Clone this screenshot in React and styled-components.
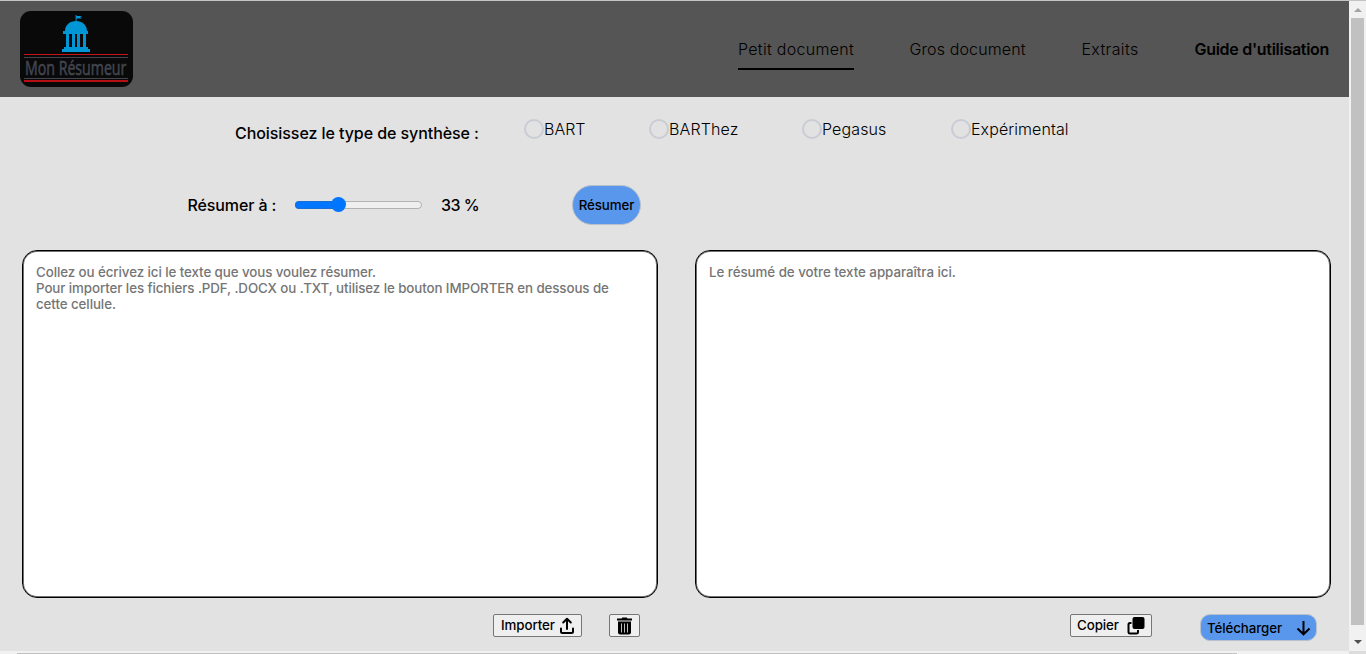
import React from "react";
import styled, { createGlobalStyle } from "styled-components";

const Global = createGlobalStyle`
  * { box-sizing: border-box; }
  body { margin: 0; overflow: hidden; background: #e2e2e2; font-family: Inter, "Liberation Sans", sans-serif; color: #000; }
`;

const Window = styled.div`
  width: 1366px;
  height: 654px;
  overflow: hidden;
  display: grid;
  grid-template-columns: 1349px 17px;
  grid-template-rows: 650px 3px;
  border-top: 1px solid #c1c5c4;
`;
const Page = styled.div`
  background: #e2e2e2;
  overflow: hidden;
`;
const Header = styled.header`
  height: 96px;
  background: #555;
  display: flex;
  justify-content: space-between;
  padding: 10px 19.5px 0 20px;
`;
const Logo = styled.div`
  width: 113px;
  height: 76px;
  background: #090909;
  border-radius: 11px;
  display: flex;
  flex-direction: column;
  align-items: flex-start;
  padding: 4px 0 0 4px;
`;
const LogoName = styled.div`
  width: 104px;
  height: 28px;
  margin-top: 2px;
  border-top: 1px solid #c41216;
  border-bottom: 2px solid #b50f13;
  display: flex;
  flex-direction: column;
  align-items: center;
  &::before, &::after {
    content: "";
    width: 100%;
    height: 1px;
    flex: none;
    background: #44454f;
  }
  &::before { margin-top: 2px; }
  &::after { margin-bottom: 1px; }
`;
const LogoText = styled.svg`
  width: 104px;
  height: 20px;
  flex: none;
  display: block;
  overflow: visible;
`;
const Nav = styled.nav`
  display: flex;
  gap: 56px;
  padding-top: 28px;
`;
const NavLink = styled.a`
  height: 31px;
  width: ${(p) => p.$w}px;
  font-size: 16px;
  line-height: 20px;
  font-weight: ${(p) => (p.$strong ? 600 : 300)};
  letter-spacing: ${(p) => p.$ls || 0}px;
  white-space: nowrap;
  border-bottom: 2px solid ${(p) => (p.$active ? "#000" : "transparent")};
`;
const TypeRow = styled.div`
  display: flex;
  height: 64px;
  padding: 22px 0 0 235px;
`;
const Label = styled.span`
  width: ${(p) => p.$w}px;
  flex: none;
  font-size: 16px;
  line-height: 20px;
  font-weight: 500;
  letter-spacing: ${(p) => p.$ls || 0}px;
  white-space: nowrap;
`;
const TypeTitle = styled(Label)`
  margin-top: 4px;
`;
const Option = styled.label`
  display: flex;
  width: ${(p) => p.$w}px;
  flex: none;
  height: 20px;
  font-size: 16px;
  line-height: 20px;
  font-weight: 300;
  letter-spacing: ${(p) => p.$ls || 0}px;
  white-space: nowrap;
`;
const Radio = styled.span`
  width: 20px;
  height: 20px;
  flex: none;
  border: 2px solid #c9ccd5;
  border-radius: 50%;
`;
const RatioRow = styled.div`
  display: flex;
  align-items: center;
  height: 89px;
  padding: 0 0 2px 187.5px;
`;
const Track = styled.div`
  width: 127px;
  height: 8px;
  margin: 0 19px 0 0;
  border: 1px solid #b2b2b2;
  border-radius: 4px;
  background: #efefef;
  display: flex;
  align-items: center;
`;
const Fill = styled.div`
  width: 44px;
  height: 8px;
  margin-left: -1px;
  flex: none;
  border-radius: 4px 0 0 4px;
  background: #0075ff;
  border: 1px solid #176fd5;
  border-right: 0;
  display: flex;
  align-items: center;
  justify-content: flex-end;
`;
const Knob = styled.div`
  width: 15px;
  height: 15px;
  flex: none;
  margin-right: -7px;
  border-radius: 50%;
  background: #0075ff;
`;
const Primary = styled.button`
  display: flex;
  align-items: center;
  justify-content: ${(p) => (p.$wide ? "space-between" : "center")};
  width: ${(p) => (p.$wide ? 117 : 69)}px;
  height: ${(p) => (p.$wide ? 27 : 40)}px;
  margin: 0;
  padding: ${(p) => (p.$wide ? "0 5px 0 6px" : "0")};
  border: 1px solid #b9c1cc;
  border-radius: ${(p) => (p.$wide ? 10 : 20)}px;
  background: #5897ec;
  color: #000;
  font: 500 13.333px/16px Inter, sans-serif;
  letter-spacing: -0.1px;
  white-space: nowrap;
`;
const Panels = styled.div`
  display: flex;
  gap: 37px;
  padding-left: 22px;
`;
const Area = styled.div`
  width: 636px;
  height: 348px;
  flex: none;
  padding: 13px 38px 0 13px;
  background: #fff;
  border: 1px solid #000;
  box-shadow: inset 0 0 0 1px #707070;
  border-radius: 15px;
  color: #757575;
  font-size: 13.333px;
  line-height: 16px;
  font-weight: 500;
`;
const Line = styled.div`
  white-space: nowrap;
  letter-spacing: ${(p) => p.$ls || 0}px;
`;
const Actions = styled.div`
  display: flex;
  align-items: flex-start;
  padding: 16px 0 0 493px;
`;
const Small = styled.button`
  display: flex;
  align-items: center;
  justify-content: space-between;
  width: ${(p) => p.$w}px;
  height: 23px;
  flex: none;
  margin: 0 ${(p) => p.$mr}px 0 0;
  padding: 0 6px 0 ${(p) => p.$pl || 7}px;
  border: 1px solid #767676;
  border-radius: 2px;
  background: #efefef;
  color: #000;
  font: 500 13.333px/16px Inter, sans-serif;
  letter-spacing: -0.08px;
  white-space: nowrap;
`;
const Caption = styled.span`
  padding-bottom: 1px;
`;
const Glyph = styled.svg`
  display: block;
  flex: none;
`;
const VBar = styled.div`
  height: 650px;
  background: #f1f1f1;
  display: flex;
  flex-direction: column;
  align-items: center;
  padding-top: 7px;
`;
const VThumb = styled.div`
  width: 13px;
  height: 607px;
  flex: none;
  margin: 6px 0 15px;
  background: #c1c1c1;
`;
const VTip = styled.div`
  width: 0;
  height: 0;
  border-left: 4px solid transparent;
  border-right: 4px solid transparent;
  ${(p) => (p.$up ? "border-bottom: 4px solid #a3a3a3;" : "border-top: 4px solid #505050;")}
`;
const HBar = styled.div`
  background: #f1f1f1;
  padding: 2px 0 0 17px;
`;
const HThumb = styled.div`
  width: 1220px;
  height: 1px;
  background: #c1c1c1;
`;
const Corner = styled.div`
  background: #dcdcdc;
`;

const Dome = () => (
  <Glyph width="32" height="37" viewBox="0 0 32 37" fill="#0096d6">
    <path d="M13 0h1v1h5v1h-1v1h1v1h-5v3h-1z" transform="translate(1 0) scale(.97 .9)" />
    <path d="M3 16C3 10 8 6 14 6S25 10 25 16h1v3H1v-3z" />
    <path d="M4 19h3v13H4zM10 19h3v13h-3zM15 19h3v13h-3zM21 19h3v13h-3z" />
    <path d="M2 32h24v2H2zM0 34h28v3H0z" />
  </Glyph>
);
const DomeBox = styled.div`
  margin-left: 38px;
`;
const Upload = () => (
  <Glyph width="16" height="18" viewBox="0 0 16 18" fill="none" stroke="#000" strokeWidth="2">
    <path d="M8 12V2M4.200 5.500L8 1.700l3.800 3.800" strokeLinecap="round" strokeLinejoin="round" />
    <path d="M2 11.500v3q0 1.500 1.500 1.500h9q1.500 0 1.500-1.500v-3" strokeLinecap="round" />
  </Glyph>
);
const Trash = () => (
  <Glyph width="15" height="18" viewBox="0 0 15 18">
    <path d="M0 1.500h4.500L5.300.5h4.400l.8 1H15v2H0z" />
    <path d="M1 4.500h13v10.800q0 2.200-2.200 2.200H3.200Q1 17.500 1 15.300z" />
    <path d="M4.500 6.500v9M7.500 6.500v9M10.500 6.500v9" stroke="#bcbcbc" strokeWidth="1" />
  </Glyph>
);
const Copy = () => (
  <Glyph width="18" height="18" viewBox="0 0 18 18">
    <rect x="5.500" y="0" width="12" height="12" rx="2" />
    <path d="M4.500 6H3Q1.500 6 1.500 7.500v7.700Q1.500 16.500 3 16.500h6.500q1.500 0 1.500-1.300V13" fill="none" stroke="#000" strokeWidth="2" />
  </Glyph>
);
const ArrowDown = () => (
  <Glyph width="15" height="16" viewBox="0 0 15 16" fill="none" stroke="#000" strokeWidth="2">
    <path d="M7.500 1v13M1.500 8.500l6 5.800 6-5.800" />
  </Glyph>
);

export default function App() {
  return (
    <>
      <Global />
      <Window>
        <Page>
          <Header>
            <Logo>
              <DomeBox><Dome /></DomeBox>
              <LogoName>
                <LogoText viewBox="0 0 104 20">
                  <text x="0" y="17" transform="translate(1 0) scale(0.68 1)" textLength="149" lengthAdjust="spacingAndGlyphs" fontFamily="Open Sans, sans-serif" fontSize="19.500" fill="#414550" stroke="#414550" strokeWidth="0.6">Mon Résumeur</text>
                </LogoText>
              </LogoName>
            </Logo>
            <Nav>
              <NavLink $w={115.5} $ls={0.3} $active>Petit document</NavLink>
              <NavLink $w={116} $ls={0.12}>Gros document</NavLink>
              <NavLink $w={57} $ls={0.35}>Extraits</NavLink>
              <NavLink $w={135} $ls={-0.29} $strong>Guide d'utilisation</NavLink>
            </Nav>
          </Header>
          <TypeRow>
            <TypeTitle $w={289} $ls={-0.07}>Choisissez le type de synthèse :</TypeTitle>
            <Option $w={125}><Radio />BART</Option>
            <Option $w={153} $ls={0.12}><Radio />BARThez</Option>
            <Option $w={149} $ls={0.12}><Radio />Pegasus</Option>
            <Option $w={120} $ls={0.08}><Radio />Expérimental</Option>
          </TypeRow>
          <RatioRow>
            <Label $w={107.5} $ls={-0.12}>Résumer à :</Label>
            <Track><Fill><Knob /></Fill></Track>
            <Label $w={131} $ls={-0.5}>33 %</Label>
            <Primary>Résumer</Primary>
          </RatioRow>
          <Panels>
            <Area>
              <Line $ls={-0.08}>Collez ou écrivez ici le texte que vous voulez résumer.</Line>
              <Line $ls={-0.085}>Pour importer les fichiers .PDF, .DOCX ou .TXT, utilisez le bouton IMPORTER en dessous de</Line>
              <Line $ls={-0.08}>cette cellule.</Line>
            </Area>
            <Area><Line $ls={-0.04}>Le résumé de votre texte apparaîtra ici.</Line></Area>
          </Panels>
          <Actions>
            <Small $w={89} $mr={27}><Caption>Importer</Caption><Upload /></Small>
            <Small $w={31} $mr={430}><Trash /></Small>
            <Small $w={82} $mr={48} $pl={6}><Caption>Copier</Caption><Copy /></Small>
            <Primary $wide>Télécharger<ArrowDown /></Primary>
          </Actions>
        </Page>
        <VBar><VTip $up /><VThumb /><VTip /></VBar>
        <HBar><HThumb /></HBar>
        <Corner />
      </Window>
    </>
  );
}
